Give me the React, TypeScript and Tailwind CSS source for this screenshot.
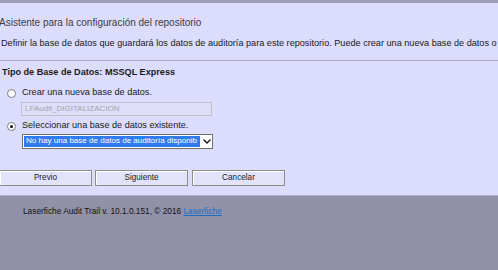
import React from "react";

function Radio({ checked }: { checked?: boolean }) {
  return (
    <span className="flex h-[9px] w-[9px] shrink-0 items-center justify-center rounded-full border border-[#7c7c84] bg-white">
      {checked && <span className="h-[3px] w-[3px] rounded-full bg-black" />}
    </span>
  );
}

function WizButton({ label, className }: { label: string; className?: string }) {
  return (
    <button
      className={
        "flex h-[16px] w-[93px] items-center justify-center border border-[#8e8e82] bg-[#e2e2fb] text-[8.2px] leading-none text-[#222] shadow-[inset_1px_1px_0_#ffffff] " +
        (className ?? "")
      }
    >
      {label}
    </button>
  );
}

export default function App() {
  return (
    <div
      className="flex h-[270px] w-[498px] flex-col overflow-hidden bg-[#dcdcfc] text-[#1a1a1a]"
      style={{ fontFamily: '"Liberation Sans", Arial, sans-serif' }}
    >
      {/* top band */}
      <div className="h-[3px] bg-[#9e9db6]" />

      {/* header */}
      <div className="mt-[13px] ml-[-1px] h-[14px] whitespace-nowrap text-[10px] leading-[14px] text-[#3c3c3c]">
        Asistente para la configuración del repositorio
      </div>
      <div className="mt-[7px] ml-[1px] h-[12px] whitespace-nowrap text-[9.15px] leading-[12px]">
        Definir la base de datos que guardará los datos de auditoría para este repositorio. Puede crear una nueva base de datos o
      </div>
      <div className="mt-[11px] h-[1px] bg-[#a9a9bb]" />

      {/* body */}
      <div className="mt-[5px] ml-[2px] h-[12px] text-[9.1px] font-bold leading-[12px]">
        Tipo de Base de Datos: MSSQL Express
      </div>

      <label className="mt-[9px] ml-[7px] flex h-[12px] items-center gap-[6px] text-[9.1px]">
        <Radio />
        <span>Crear una nueva base de datos.</span>
      </label>
      <div className="mt-[3px] ml-[21px] flex h-[14px] w-[191px] items-center border border-[#c0c0cc] bg-[#dedefb] pl-[3px] text-[8px] text-[#a4a4a8]">
        LFAudit_DIGITALIZACION
      </div>

      <label className="mt-[4px] ml-[7px] flex h-[12px] items-center gap-[6px] text-[9.1px]">
        <Radio checked />
        <span>Seleccionar una base de datos existente.</span>
      </label>
      <div className="mt-[2px] ml-[22px] flex h-[15px] w-[191px] items-stretch border border-[#6e6e6e] bg-white text-[8.05px]">
        <span className="m-[1px] flex flex-1 items-center overflow-hidden whitespace-nowrap bg-[#2f7cf0] pl-[2px] text-white">
          No hay una base de datos de auditoría disponib
        </span>
        <span className="flex w-[11px] items-center justify-center">
          <svg width="8" height="5" viewBox="0 0 8 5" fill="none">
            <path d="M0.5 0.5 L4 4 L7.5 0.5" stroke="#111" strokeWidth="1.3" />
          </svg>
        </span>
      </div>

      {/* buttons */}
      <div className="mt-[21px] ml-[-1px] flex">
        <WizButton label="Previo" />
        <WizButton label="Siguiente" className="ml-[3px]" />
        <WizButton label="Cancelar" className="ml-[4px]" />
      </div>

      {/* footer */}
      <div className="mt-[9px] flex-1 border-t border-[#b4b4c6] bg-[#9191a9] pl-[23px] pt-[10px]">
        <div className="text-[8.3px] leading-[10px] text-[#111]">
          Laserfiche Audit Trail v. 10.1.0.151, © 2016{" "}
          <a className="text-[#1b6dc2] underline">Laserfiche</a>
        </div>
      </div>
    </div>
  );
}
